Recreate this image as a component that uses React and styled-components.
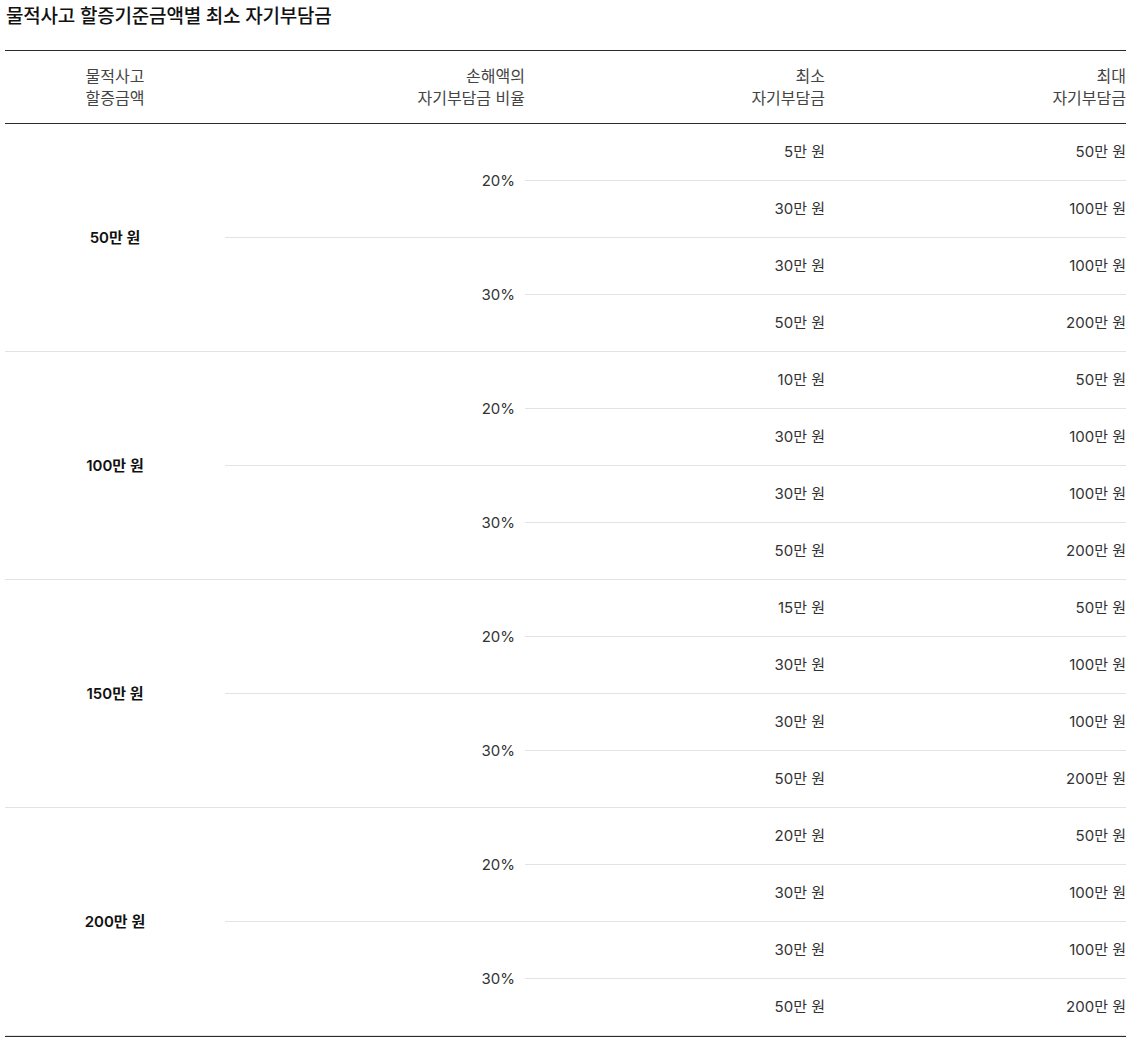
import React from "react";
import styled, { createGlobalStyle } from "styled-components";

const GlobalStyle = createGlobalStyle`
  html, body { margin: 0; padding: 0; background: #fff; }
  body { font-family: Inter, "Noto Sans CJK KR", sans-serif; color: #222; }
`;

const Page = styled.div`
  padding: 5px 0 0 5px;
`;

const Title = styled.h2`
  margin: 0 0 21px 1px;
  font-size: 19px;
  line-height: 24px;
  font-weight: 500;
  letter-spacing: -0.2px;
  color: #111;
`;

const Table = styled.table`
  width: 1121px;
  border-collapse: separate;
  border-spacing: 0;
  table-layout: fixed;
  border-top: 1px solid #2b2b2b;
  border-bottom: 1px solid #2b2b2b;
`;

const Th = styled.th`
  height: 72px;
  padding: 0;
  border-bottom: 1px solid #2b2b2b;
  font-size: 16px;
  line-height: 22px;
  font-weight: 400;
  color: #444;
  letter-spacing: 0;
  text-align: ${(p) => (p.$align === "center" ? "center" : "right")};
  vertical-align: middle;
`;

const Td = styled.td`
  height: 56px;
  padding: 0 ${(p) => (p.$pr ? p.$pr : 0)}px 0 0;
  border-bottom: 1px solid #e3e3e3;
  font-size: 15px;
  line-height: 22px;
  color: #333;
  letter-spacing: 0;
  text-align: ${(p) => (p.$align === "center" ? "center" : "right")};
  vertical-align: middle;
  font-weight: ${(p) => (p.$bold ? 600 : 400)};
  ${(p) => p.$bold && "color: #111;"}
`;

const groups = [
  { base: "50만 원", mins: ["5만 원", "30만 원", "30만 원", "50만 원"] },
  { base: "100만 원", mins: ["10만 원", "30만 원", "30만 원", "50만 원"] },
  { base: "150만 원", mins: ["15만 원", "30만 원", "30만 원", "50만 원"] },
  { base: "200만 원", mins: ["20만 원", "30만 원", "30만 원", "50만 원"] },
];
const maxes = ["50만 원", "100만 원", "100만 원", "200만 원"];
const rates = ["20%", "30%"];

export default function App() {
  return (
    <>
      <GlobalStyle />
      <Page>
        <Title>물적사고 할증기준금액별 최소 자기부담금</Title>
        <Table>
          <colgroup>
            <col style={{ width: 220 }} />
            <col style={{ width: 300 }} />
            <col style={{ width: 300 }} />
            <col style={{ width: 301 }} />
          </colgroup>
          <thead>
            <tr>
              <Th $align="center">
                물적사고
                <br />
                할증금액
              </Th>
              <Th>
                손해액의
                <br />
                자기부담금 비율
              </Th>
              <Th>
                최소
                <br />
                자기부담금
              </Th>
              <Th>
                최대
                <br />
                자기부담금
              </Th>
            </tr>
          </thead>
          <tbody>
            {groups.map((g) =>
              g.mins.map((m, i) => (
                <tr key={g.base + i}>
                  {i === 0 && (
                    <Td rowSpan={4} $align="center" $bold>
                      {g.base}
                    </Td>
                  )}
                  {i % 2 === 0 && (
                    <Td rowSpan={2} $pr={10}>
                      {rates[i / 2]}
                    </Td>
                  )}
                  <Td>{m}</Td>
                  <Td>{maxes[i]}</Td>
                </tr>
              ))
            )}
          </tbody>
        </Table>
      </Page>
    </>
  );
}
